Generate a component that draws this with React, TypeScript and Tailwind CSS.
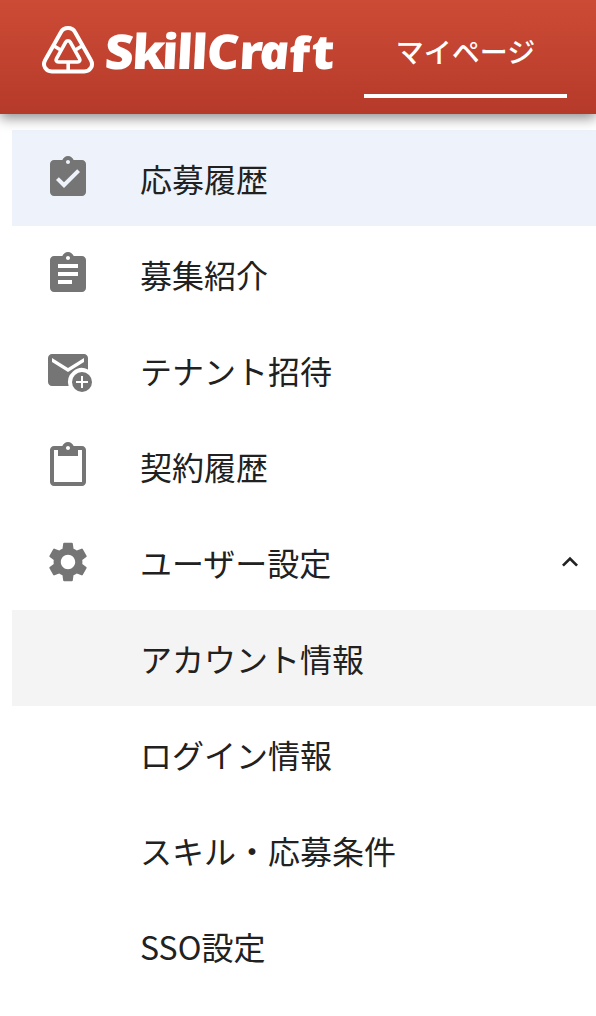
import { useState, type ReactNode } from "react";
import {
  MdAssignment,
  MdAssignmentTurnedIn,
  MdContentPaste,
  MdExpandLess,
  MdExpandMore,
  MdSettings,
} from "react-icons/md";

interface MenuItem {
  label: string;
  icon: ReactNode;
}

const menuItems: MenuItem[] = [
  { label: "応募履歴", icon: <MdAssignmentTurnedIn className="size-12" /> },
  { label: "募集紹介", icon: <MdAssignment className="size-12" /> },
  { label: "テナント招待", icon: <InviteIcon /> },
  { label: "契約履歴", icon: <MdContentPaste className="size-12" /> },
];

const settingItems = ["アカウント情報", "ログイン情報", "スキル・応募条件", "SSO設定"];

/** Envelope with a plus badge */
function InviteIcon() {
  return (
    <svg viewBox="0 0 24 24" className="size-12" fill="currentColor">
      <path d="M20 4H4c-1.1 0-2 .9-2 2v12c0 1.1.9 2 2 2h8.3a7 7 0 0 1 9.7-8.3V6c0-1.1-.9-2-2-2zm0 4-8 5-8-5V6l8 5 8-5v2z" />
      <circle cx="19" cy="18" r="5" />
      <path d="M19 15v6M16 18h6" stroke="#fff" fill="none" />
    </svg>
  );
}

function Logo() {
  return (
    <div className="flex items-start">
      <svg width="54" height="50" viewBox="0 0 54 50" fill="none" stroke="#fff" strokeWidth="4">
        <path d="M19.9 7.2a8.2 8.2 0 0 1 14.2 0L49.8 34.9c3.2 5.7-.6 11.6-6.6 11.6H10.8C4.8 46.5 1 40.6 4.2 34.9z" />
        <path
          d="M24.7 17.2c1.1-1.9 3.5-1.9 4.6 0l9.2 16.3c1 1.9.1 3.5-1.9 3.5H17.4c-2 0-2.9-1.6-1.9-3.5z"
          strokeWidth="3.6"
        />
        <path d="M13.5 21.3l7 4.2M40.5 21.3l-7 4.2M27.2 37v9" strokeWidth="3.6" />
      </svg>
      {/* The "a" is the single-storey italic form, so it needs its own skew */}
      <svg
        width="240"
        height="80"
        viewBox="0 0 240 80"
        fill="#fff"
        className="-mt-3 ml-2 font-['Open_Sans',sans-serif] text-[48px] font-extrabold"
      >
        <text
          x="1 27 55.5 69.5 83.5 98 129"
          y="56"
          transform="translate(3 0) skewX(-3) scale(1.05 1)"
        >
          SkillCr
        </text>
        <text x="149.5" y="56" transform="translate(-6 0) skewX(7) scale(1.05 1)" className="italic">
          a
        </text>
        <text x="176.5 197.5" y="59.5 56" transform="translate(3 0) skewX(-3) scale(1.05 1)">
          ft
        </text>
      </svg>
    </div>
  );
}

export default function App() {
  const [selected, setSelected] = useState("応募履歴");
  const [open, setOpen] = useState(true);

  return (
    <div className="h-[1016px] w-full overflow-hidden bg-white font-['Noto_Sans_CJK_JP',sans-serif] text-[32px] leading-[48px] text-[#212121]">
      {/* Header */}
      <header className="relative z-10 flex h-[114px] bg-linear-to-b from-[#cc4b35] to-[#b63a2a] pl-[41px] shadow-[0_4px_12px_rgba(0,0,0,0.45)]">
        <div className="w-[323px] shrink-0 pt-[25px]">
          <Logo />
        </div>
        <a className="h-[98px] w-[203px] shrink-0 border-b-4 border-white pt-[27px] text-center text-[28px] font-medium text-white">
          マイページ
        </a>
      </header>

      {/* Menu */}
      <nav className="pt-4 pl-3">
        {menuItems.map((item) => (
          <button
            key={item.label}
            type="button"
            onClick={() => setSelected(item.label)}
            className={`flex h-24 w-full items-center gap-12 pl-8 ${
              item.label === selected ? "bg-[#eef3fb]" : ""
            }`}
          >
            <span className="text-[#757575]">{item.icon}</span>
            <span>{item.label}</span>
          </button>
        ))}

        <button
          type="button"
          onClick={() => setOpen(!open)}
          className="flex h-24 w-full items-center gap-12 pr-2.5 pl-8"
        >
          <MdSettings className="size-12 text-[#757575]" />
          <span className="flex-1 text-left">ユーザー設定</span>
          {open ? <MdExpandLess className="size-8" /> : <MdExpandMore className="size-8" />}
        </button>

        {open &&
          settingItems.map((label, index) => (
            <button
              key={label}
              type="button"
              className={`flex h-24 w-full items-center pl-32 ${index === 0 ? "bg-[#f4f4f4]" : ""}`}
            >
              {label}
            </button>
          ))}
      </nav>
    </div>
  );
}
